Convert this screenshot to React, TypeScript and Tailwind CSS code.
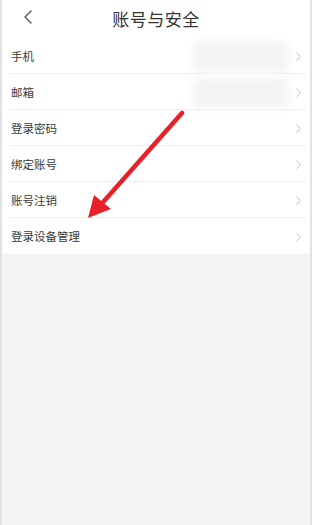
import { ChevronLeft, ChevronRight } from 'lucide-react';

const rows = [
  { label: '手机', hidden: true },
  { label: '邮箱', hidden: true },
  { label: '登录密码' },
  { label: '绑定账号' },
  { label: '账号注销' },
  { label: '登录设备管理' },
];

export default function App() {
  return (
    <div
      className="relative w-[312px] h-[525px] bg-[#f3f3f3] border-l-2 border-r-2 border-[#e2e2e2] overflow-hidden"
      style={{ fontFamily: '"Noto Sans CJK SC", "Noto Sans", sans-serif' }}
    >
      <div className="bg-white">
        {/* header */}
        <div className="relative h-[38px] flex items-center justify-center">
          <ChevronLeft className="absolute left-[14px] top-[5px] text-[#555]" size={24} strokeWidth={1.4} />
          <span className="text-[17px] text-[#333] tracking-[0.5px]">账号与安全</span>
        </div>

        {rows.map((row, i) => (
          <div key={i} className="pl-2 pr-[4px]">
            <div
              className={`h-[36px] flex items-center pl-[1px] pt-[2px] ${
                i < rows.length - 1 ? 'border-b border-[#eeeeee]' : ''
              }`}
            >
              <span className="text-[11.5px] text-[#3a3a3a]">{row.label}</span>
              <div className="flex-1" />
              {row.hidden && (
                <div className="w-[96px] h-[30px] mr-[2px] bg-[#f4f4f4] blur-[4px] rounded" />
              )}
              <ChevronRight className="text-[#b5b5b5]" size={15} strokeWidth={1.4} />
            </div>
          </div>
        ))}
      </div>

      {/* annotation arrow */}
      <svg className="absolute left-0 top-0" width="312" height="525" viewBox="0 0 312 525">
        <line x1="180" y1="113" x2="95" y2="209" stroke="#e8202a" strokeWidth="4.5" strokeLinecap="round" />
        <polygon points="86,218 92,195 109,209" fill="#e8202a" />
      </svg>
    </div>
  );
}
